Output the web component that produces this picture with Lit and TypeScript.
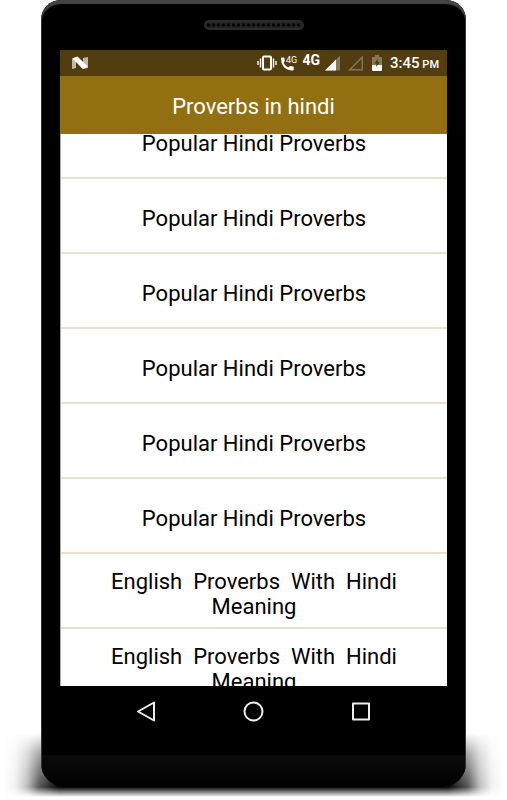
import { LitElement, html, css } from "lit";
import { customElement } from "lit/decorators.js";

const POPULAR = "Popular Hindi Proverbs";
const MEANING = "English  Proverbs  With  Hindi  Meaning";
const CATEGORIES = [POPULAR, POPULAR, POPULAR, POPULAR, POPULAR, POPULAR, MEANING, MEANING];

@customElement("status-bar")
class StatusBar extends LitElement {
  static styles = css`
    :host {
      display: flex;
      align-items: center;
      gap: 3px;
      height: 26px;
      padding: 0 8px 0 11px;
      background: #523d0f;
      color: #fff;
      font-family: Roboto, sans-serif;
      font-weight: 500;
    }
    svg {
      display: block;
      flex: none;
    }
    .note {
      margin-right: auto;
    }
    .network {
      font-size: 14px;
      line-height: 14px;
      font-weight: 700;
      padding-bottom: 6px;
    }
    .tag {
      font: 400 9px Roboto, sans-serif;
    }
    .time {
      font-size: 15px;
      line-height: 26px;
      padding-top: 2px;
      white-space: nowrap;
    }
    .period {
      font-size: 11px;
    }
  `;

  render() {
    return html`
      <svg class="note" width="18" height="16" viewBox="0 0 18 16" aria-label="Android">
        <path d="M1 3.500 5 2v11l-4 1zM12 3l5-1v11l-5 1z" fill="#bfb8a6" />
        <path d="M1.500 3.500 6.500 1.500 16.800 11.500 12 14.200z" fill="#fff" />
      </svg>
      <svg width="20" height="16" viewBox="0 0 20 16" fill="none" stroke="#fff" aria-label="Vibrate">
        <rect x="6" y="1.500" width="8" height="13" rx="1" stroke-width="2" />
        <path d="M3.500 3.500v9M1 6v4M16.500 3.500v9M19 6v4" stroke-width="1.400" />
      </svg>
      <svg width="20" height="16" viewBox="0 0 20 16" aria-label="4G calling">
        <path
          d="M1.800 2.500h2q.5 0 .6.6l.4 2.700q0 .4-.3.7L3.600 8q1.700 3 4.700 4.600l1.500-1.500q.3-.3.8-.2l2.500.5q.6.1.6.7v2.600q0 .8-.8.8Q6.700 15.300 3.500 11.500 1 8.300 1 3.300q0-.8.8-.8z"
          fill="#fff"
        />
        <text class="tag" x="6" y="8" fill="#fff">4G</text>
      </svg>
      <span class="network">4G</span>
      <svg width="19" height="16" viewBox="0 0 19 16" aria-label="Signal">
        <path d="M17 .5v15H2z" fill="#86775a" />
        <path d="M13 4.500v11H2z" fill="#fff" />
      </svg>
      <svg width="21" height="16" viewBox="0 0 21 16" aria-label="No signal on second line">
        <path d="M17.300 2.200v12.600H4.800z" fill="none" stroke="#86775a" stroke-width="1.400" />
      </svg>
      <svg width="18" height="16" viewBox="0 0 18 16" aria-label="Battery charging">
        <path d="M6 0h4v2h3v8H3V2h3z" fill="#86775a" />
        <path d="M3 10h10v5q0 1-1 1H4q-1 0-1-1z" fill="#fff" />
        <path d="M8.800 3.500v3.400h2L7.300 12V8.500H5.400z" fill="#523d0f" />
      </svg>
      <span class="time">3:45<span class="period"> PM</span></span>
    `;
  }
}

@customElement("nav-keys")
class NavKeys extends LitElement {
  static styles = css`
    :host {
      display: grid;
      grid-template-columns: repeat(3, 1fr);
      height: 52px;
      padding: 0 32px;
    }
    button {
      display: grid;
      place-items: center;
      margin: 0;
      padding: 0;
      border: 0;
      background: none;
    }
    svg {
      display: block;
      fill: none;
      stroke: #eee;
      stroke-width: 2;
      stroke-linejoin: round;
    }
  `;

  render() {
    return html`
      <button aria-label="Back">
        <svg width="22" height="22" viewBox="0 0 22 22"><path d="M19 1.500v18L3 10.500z" /></svg>
      </button>
      <button aria-label="Home">
        <svg width="22" height="22" viewBox="0 0 22 22"><circle cx="11.500" cy="10.500" r="9" /></svg>
      </button>
      <button aria-label="Recent apps">
        <svg width="22" height="22" viewBox="0 0 22 22"><path d="M3 2.500h16v16H3z" /></svg>
      </button>
    `;
  }
}

@customElement("app-root")
class AppRoot extends LitElement {
  static styles = css`
    :host {
      display: block;
      box-sizing: border-box;
      height: 100vh;
      padding: 0 41px 13px;
      background: #fff;
      font-family: Roboto, sans-serif;
    }
    .device {
      position: relative;
      height: 100%;
    }
    .shadow {
      position: absolute;
      left: -38px;
      right: -38px;
      bottom: -10px;
      height: 64px;
      background: linear-gradient(
        to right,
        transparent,
        rgba(0, 0, 0, 0.05) 12px,
        rgba(0, 0, 0, 0.25) 24px,
        rgba(0, 0, 0, 0.65) 36px,
        #000 56px,
        #000 calc(100% - 56px),
        rgba(0, 0, 0, 0.65) calc(100% - 36px),
        rgba(0, 0, 0, 0.25) calc(100% - 24px),
        rgba(0, 0, 0, 0.05) calc(100% - 12px),
        transparent
      );
      mask-image: linear-gradient(to bottom, transparent, rgba(0, 0, 0, 0.5) 20px, #000 54px, transparent);
    }
    .phone {
      position: relative;
      display: flex;
      flex-direction: column;
      box-sizing: border-box;
      height: 100%;
      padding: 0 19px;
      overflow: hidden;
      border-radius: 20px 20px 24px 24px;
      background: #000;
      box-shadow: inset 0 4px 1px #444, inset 1px 0 0 #333, inset -1px 0 0 #333;
    }
    .top {
      flex: none;
      display: flex;
      justify-content: center;
      align-items: center;
      height: 50px;
    }
    .speaker {
      box-sizing: border-box;
      width: 100px;
      height: 10px;
      border: 2px solid #2b2b2b;
      border-radius: 5px;
      background: radial-gradient(circle, #000 1px, #222 2px) 0 0 / 5px 6px;
    }
    .title {
      flex: none;
      margin: 0;
      padding-top: 4px;
      background: #927012;
      color: #fff;
      font-size: 22px;
      line-height: 54px;
      font-weight: 400;
      text-align: center;
    }
    .window {
      flex: 1;
      min-height: 0;
      overflow: hidden;
      background: #fff;
    }
    .list {
      margin: -30px 0 0;
      padding: 0;
      list-style: none;
      border-left: 1px solid #aaa;
    }
    .item {
      display: block;
      box-sizing: border-box;
      width: 100%;
      height: 75px;
      margin: 0;
      padding: 6px 48px 0;
      border: 0;
      border-bottom: 2px solid #e9e1cf;
      background: #fff;
      color: #000;
      font: 22px/25px Roboto, sans-serif;
      text-align: center;
      white-space: pre-wrap;
    }
    .keys {
      flex: none;
    }
    .chin {
      flex: none;
      height: 32px;
      margin: 17px -18px 0;
      background: linear-gradient(#0a0a0a, #060606 50%, #000);
    }
  `;

  render() {
    return html`
      <div class="device">
        <div class="shadow"></div>
        <div class="phone">
          <div class="top"><div class="speaker"></div></div>
          <status-bar></status-bar>
          <h1 class="title">Proverbs in hindi</h1>
          <main class="window">
            <ul class="list">
              ${CATEGORIES.map((name) => html`<li><button class="item">${name}</button></li>`)}
            </ul>
          </main>
          <nav-keys class="keys"></nav-keys>
          <div class="chin"></div>
        </div>
      </div>
    `;
  }
}
